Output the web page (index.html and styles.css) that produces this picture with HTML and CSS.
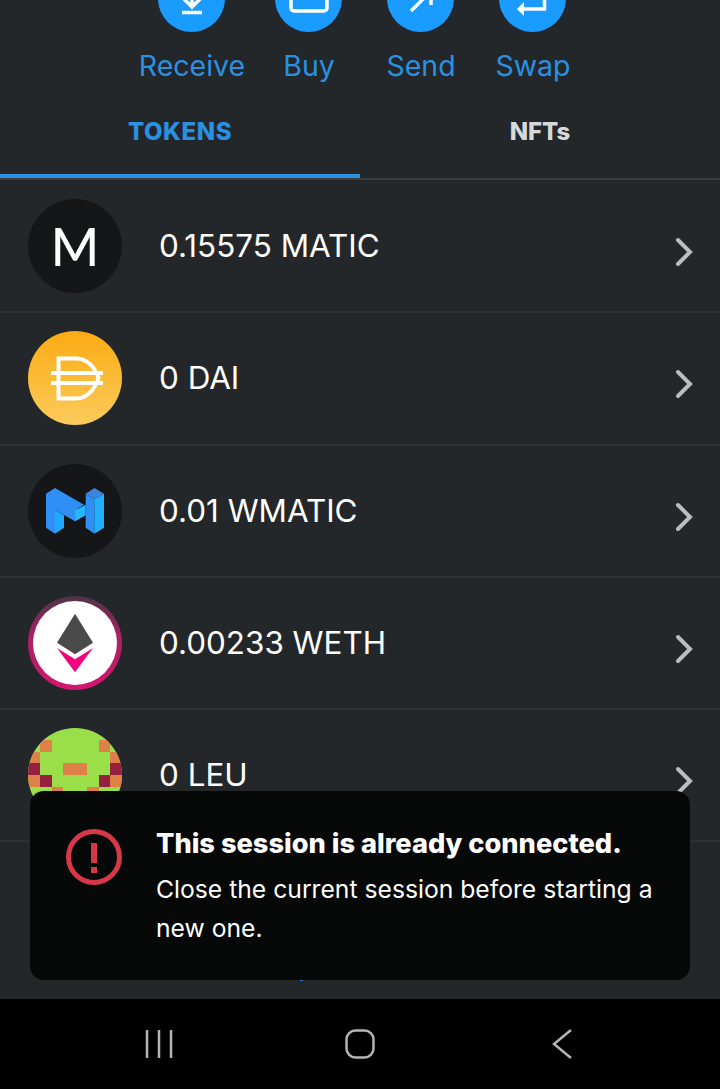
FILE: index.html
```html
<!DOCTYPE html>
<html lang="en">
<head>
<meta charset="utf-8">
<title>Wallet</title>
<link rel="stylesheet" href="styles.css">
</head>
<body>
<div class="screen">
  <main class="wallet">
    <section class="actions">
      <div class="action">
        <div class="action-circle">
          <svg class="action-icon" viewBox="0 0 67 67"><path d="M34 20V41M25 33l9 9 9-9M24 47.500H44" /></svg>
        </div>
        <span class="action-label">Receive</span>
      </div>
      <div class="action">
        <div class="action-circle">
          <svg class="action-icon" viewBox="0 0 67 67"><rect x="16" y="20" width="36" height="26" rx="3" /></svg>
        </div>
        <span class="action-label">Buy</span>
      </div>
      <div class="action">
        <div class="action-circle">
          <svg class="action-icon" viewBox="0 0 67 67"><path d="M24 46 44 26M29 26H44V40" /></svg>
        </div>
        <span class="action-label">Send</span>
      </div>
      <div class="action">
        <div class="action-circle">
          <svg class="action-icon" viewBox="0 0 67 67"><path d="M45.500 26V44H22" /><polygon class="action-fill" points="18,44 25,37 25,51" /></svg>
        </div>
        <span class="action-label">Swap</span>
      </div>
    </section>

    <nav class="tabs">
      <div class="tab tab-active">TOKENS</div>
      <div class="tab">NFTs</div>
    </nav>

    <section class="tokens">
      <div class="token">
        <div class="token-icon token-icon-dark"><span class="token-letter">M</span></div>
        <span class="token-name">0.15575 MATIC</span>
        <svg class="chevron" viewBox="0 0 18 30"><path d="M3 3 15 15 3 27" /></svg>
      </div>
      <div class="token">
        <svg class="token-icon" viewBox="0 0 94 94">
          <defs><linearGradient id="dai" x1="0" y1="0" x2="0" y2="1"><stop offset="0" stop-color="#fbab12"/><stop offset="1" stop-color="#fbcb5c"/></linearGradient></defs>
          <circle cx="47" cy="47" r="47" fill="url(#dai)"/>
          <path class="dai-mark" d="M30.500 27.500H48C59 27.500 67 36 70.500 47 67 58 59 67.500 48 67.500H30.500ZM23 42H75M23 52H75"/>
        </svg>
        <span class="token-name">0 DAI</span>
        <svg class="chevron" viewBox="0 0 18 30"><path d="M3 3 15 15 3 27" /></svg>
      </div>
      <div class="token">
        <svg class="token-icon" viewBox="84 41 282 282">
          <circle cx="225" cy="182" r="141" fill="#141618"/>
          <polygon fill="#2f8ff5" points="138,130 165,113 252,163 225,180 225,213 165,178 165,250 138,232"/>
          <polygon fill="#1fa8ff" points="165,178 192,195 192,232 165,250"/>
          <polygon fill="#22b8ff" points="225,180 257,163 257,195 225,213"/>
          <polygon fill="#2f8ff5" points="257,130 283,147 283,250 257,232"/>
          <polygon fill="#20b0ff" points="283,147 312,130 312,232 283,250"/>
          <polygon fill="#3b85e0" points="257,130 283,113 312,130 283,147"/>
        </svg>
        <span class="token-name">0.01 WMATIC</span>
        <svg class="chevron" viewBox="0 0 18 30"><path d="M3 3 15 15 3 27" /></svg>
      </div>
      <div class="token">
        <svg class="token-icon" viewBox="84 438 282 282">
          <defs><linearGradient id="weth" x1="0" y1="0" x2="0" y2="1"><stop offset="0" stop-color="#4c3547"/><stop offset="0.4" stop-color="#a52262"/><stop offset="1" stop-color="#d3166f"/></linearGradient></defs>
          <circle cx="225" cy="579" r="141" fill="url(#weth)"/>
          <circle cx="225" cy="579" r="126" fill="#fff"/>
          <polygon fill="#4a4a4a" points="225,491 279,578 225,613 171,578"/>
          <polygon fill="#f0047f" points="171,594 225,628 279,594 225,667"/>
        </svg>
        <span class="token-name">0.00233 WETH</span>
        <svg class="chevron" viewBox="0 0 18 30"><path d="M3 3 15 15 3 27" /></svg>
      </div>
      <div class="token">
        <svg class="token-icon leu" viewBox="0 0 8 8" shape-rendering="crispEdges">
          <defs><clipPath id="leu"><circle cx="4" cy="4" r="4"/></clipPath></defs>
          <g clip-path="url(#leu)">
            <rect width="8" height="8" fill="#9ade4a"/>
            <g fill="#dd8149">
              <rect x="1" y="1" width="1" height="1"/><rect x="6" y="1" width="1" height="1"/>
              <rect x="0" y="2" width="1" height="1"/><rect x="7" y="2" width="1" height="1"/>
              <rect x="3" y="3" width="2" height="1"/>
              <rect x="0" y="4" width="1" height="1"/><rect x="7" y="4" width="1" height="1"/>
              <rect x="2" y="5" width="1" height="1"/><rect x="5" y="5" width="1" height="1"/>
            </g>
            <g fill="#96203f">
              <rect x="0" y="3" width="1" height="1"/><rect x="7" y="3" width="1" height="1"/>
              <rect x="1" y="4" width="1" height="1"/><rect x="6" y="4" width="1" height="1"/>
            </g>
          </g>
        </svg>
        <span class="token-name">0 LEU</span>
        <svg class="chevron" viewBox="0 0 18 30"><path d="M3 3 15 15 3 27" /></svg>
      </div>
    </section>
  </main>

  <footer class="navbar">
    <svg class="nav-icon" viewBox="0 0 30 30"><path d="M3 1V29M15 1V29M27 1V29" /></svg>
    <svg class="nav-icon" viewBox="0 0 30 30"><rect x="1.500" y="1.500" width="27" height="27" rx="9" /></svg>
    <svg class="nav-icon" viewBox="0 0 30 30"><path d="M26 1 9 15 26 29" /></svg>
  </footer>

  <div class="speck"></div>

  <aside class="toast">
    <svg class="toast-icon" viewBox="0 0 56 56">
      <circle cx="28" cy="28" r="25.500"/>
      <rect x="25" y="14" width="6" height="20"/>
      <rect x="25" y="38" width="6" height="6"/>
    </svg>
    <div class="toast-body">
      <div class="toast-title">This session is already connected.</div>
      <div class="toast-text">Close the current session before starting a new one.</div>
    </div>
  </aside>
</div>
</body>
</html>
```
FILE: styles.css
```css
* { box-sizing: border-box; }
html, body { margin: 0; padding: 0; background: #000; }
body { font-family: "Inter", "Liberation Sans", sans-serif; }

.screen {
  position: relative;
  width: 720px;
  height: 1089px;
  overflow: hidden;
  display: flex;
  flex-direction: column;
  background: #000;
}

.wallet {
  height: 999px;
  background: #24272a;
  overflow: hidden;
  flex: none;
}

.actions {
  display: flex;
  justify-content: center;
  padding-left: 3px;
  margin-top: -35px;
  height: 119px;
}
.action {
  width: 117px;
  display: flex;
  flex-direction: column;
  align-items: center;
}
.action:nth-child(3) { width: 107px; }
.action-circle {
  width: 67px;
  height: 67px;
  border-radius: 50%;
  background: #1a9bff;
  flex: none;
}
.action-icon {
  display: block;
  width: 67px;
  height: 67px;
  fill: none;
  stroke: #fff;
  stroke-width: 3.500;
}
.action-fill { fill: #fff; stroke: none; }
.action-label {
  margin-top: 16px;
  margin-left: 2px;
  font-size: 28.500px;
  line-height: 36px;
  color: #2a91e2;
  white-space: nowrap;
}

.tabs {
  display: flex;
  height: 96px;
  border-bottom: 2px solid #3a3d40;
}
.tab {
  flex: 1;
  display: flex;
  justify-content: center;
  align-items: center;
  padding-top: 4px;
  font-size: 24px;
  font-weight: 800;
  color: #d6d9dc;
  height: 94px;
  border-bottom: 4px solid transparent;
}
.tab-active {
  color: #2a91e2;
  letter-spacing: 0.600px;
  border-bottom-color: #2a91e2;
}

.tokens { margin-top: 1px; }
.token {
  height: 132.300px;
  padding: 0 27px 0 28px;
  display: flex;
  align-items: center;
  border-bottom: 2px solid #2f3235;
}
.token-icon {
  flex: none;
  width: 94px;
  height: 94px;
  display: block;
}
.token-icon-dark {
  border-radius: 50%;
  background: #141618;
  display: flex;
  align-items: center;
  justify-content: center;
}
.token-letter {
  font-family: "Lato", "Liberation Sans", sans-serif;
  font-size: 52px;
  font-weight: 500;
  color: #fff;
  line-height: 1;
}
.dai-mark {
  fill: none;
  stroke: #fff;
  stroke-width: 4;
}
.token-name {
  flex: 1;
  margin-left: 37px;
  font-size: 31.400px;
  color: #fff;
  white-space: nowrap;
}
.chevron {
  flex: none;
  width: 18px;
  height: 30px;
  margin-top: 12px;
  fill: none;
  stroke: #bbbec1;
  stroke-width: 4;
  stroke-linecap: round;
  stroke-linejoin: miter;
}

.navbar {
  flex: 1;
  display: flex;
  background: #000;
  padding-left: 144px;
  padding-right: 145px;
  justify-content: space-between;
  align-items: center;
}
.nav-icon {
  width: 30px;
  height: 30px;
  fill: none;
  stroke: #b4b4b4;
  stroke-width: 2.500;
}

.speck {
  position: absolute;
  left: 300px;
  top: 980px;
  width: 3px;
  height: 1px;
  background: #3f6fd0;
}

.toast {
  position: absolute;
  left: 30px;
  top: 791px;
  width: 660px;
  height: 189px;
  padding: 38px 30px 0 36px;
  border-radius: 14px;
  background: #070909;
  display: flex;
  gap: 34px;
}
.toast-icon {
  flex: none;
  width: 56px;
  height: 56px;
  fill: #d73847;
}
.toast-icon circle {
  fill: none;
  stroke: #d73847;
  stroke-width: 5;
}
.toast-title {
  margin-top: -2px;
  font-size: 27.200px;
  font-weight: 800;
  line-height: 34px;
  color: #fff;
  white-space: nowrap;
}
.toast-text {
  margin-top: 9px;
  font-size: 24.700px;
  line-height: 39px;
  color: #fff;
}
```
